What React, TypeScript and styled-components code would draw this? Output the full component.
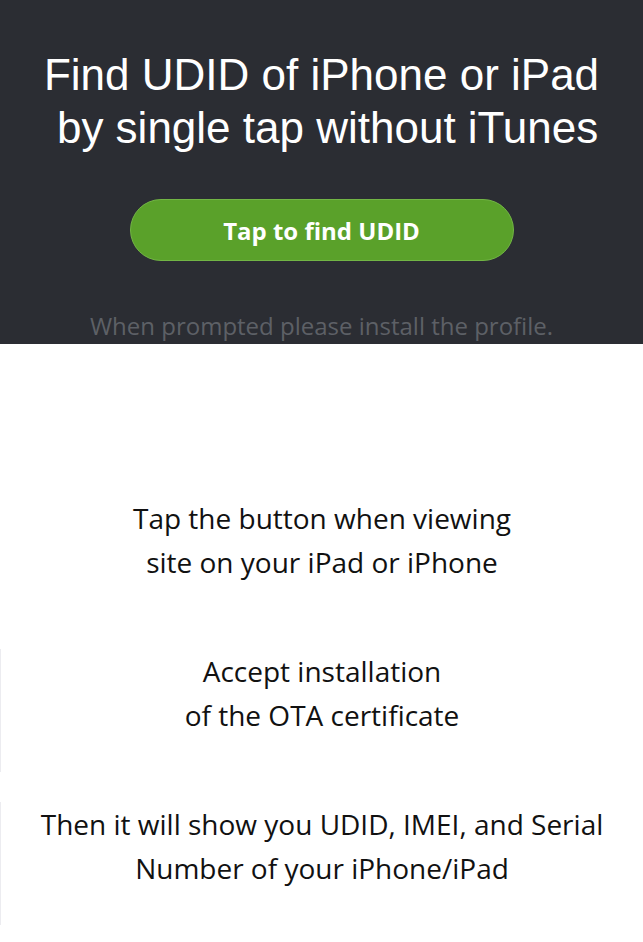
import React from "react";
import styled, { createGlobalStyle } from "styled-components";

const Global = createGlobalStyle`
  html, body { margin: 0; padding: 0; background: #ffffff; }
  body { font-family: "Open Sans", "Liberation Sans", sans-serif; }
`;

const Page = styled.div`
  width: 643px;
  min-height: 942px;
  display: flex;
  flex-direction: column;
  background: #ffffff;
`;

const Hero = styled.header`
  background: #2b2d33;
  height: 344px;
  box-sizing: border-box;
  padding-top: 48px;
  display: flex;
  flex-direction: column;
  align-items: center;
`;

const Title = styled.h1`
  margin: 0;
  font-family: "Liberation Sans", Arial, sans-serif;
  font-weight: 400;
  font-size: 44px;
  line-height: 53px;
  color: #ffffff;
  text-align: center;
  white-space: pre;
`;

const TapButton = styled.button`
  margin-top: 45px;
  width: 384px;
  height: 62px;
  border-radius: 31px;
  border: 1px solid #72b545;
  background: #5aa12a;
  color: #ffffff;
  font-family: "Open Sans", sans-serif;
  font-weight: 700;
  font-size: 24px;
  cursor: pointer;
`;

const Hint = styled.p`
  margin: 50px 0 0;
  font-family: "Open Sans", sans-serif;
  font-size: 24px;
  line-height: 30px;
  color: #5d6066;
`;

const Steps = styled.section`
  padding-top: 152px;
  display: flex;
  flex-direction: column;
  gap: 30px;
`;

const Step = styled.div<{ $edge?: boolean }>`
  height: 123px;
  box-sizing: border-box;
  border-left: 1px solid ${(p) => (p.$edge ? "#ececf0" : "transparent")};
  font-family: "Open Sans", sans-serif;
  font-size: 28px;
  line-height: 44px;
  color: #111111;
  text-align: center;
`;

export default function App() {
  return (
    <>
      <Global />
      <Page>
        <Hero>
          <Title>{"Find UDID of iPhone or iPad\n by single tap without iTunes"}</Title>
          <TapButton>Tap to find UDID</TapButton>
          <Hint>When prompted please install the profile.</Hint>
        </Hero>
        <Steps>
          <Step>
            Tap the button when viewing
            <br />
            site on your iPad or iPhone
          </Step>
          <Step $edge>
            Accept installation
            <br />
            of the OTA certificate
          </Step>
          <Step $edge>
            Then it will show you UDID, IMEI, and Serial
            <br />
            Number of your iPhone/iPad
          </Step>
        </Steps>
      </Page>
    </>
  );
}
